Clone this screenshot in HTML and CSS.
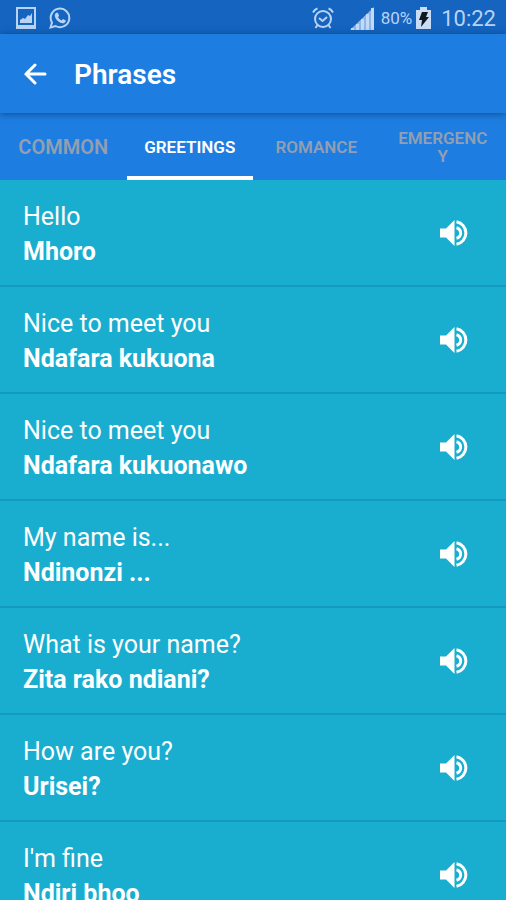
FILE: index.html
```html
<!DOCTYPE html>
<html lang="en">
<head>
<meta charset="utf-8">
<meta name="viewport" content="width=device-width, initial-scale=1">
<title>Phrases</title>
<link rel="stylesheet" href="styles.css">
</head>
<body>
<svg width="0" height="0" class="sprite" aria-hidden="true">
  <symbol id="speaker" viewBox="0 0 30 26">
    <path fill="#fff" d="M0 8.500h6L14.500 0v26L6 17.500H0z"/>
    <path fill="none" stroke="#fff" stroke-width="3" d="M16.500 1.700a11.500 11.500 0 0 1 0 22.600"/>
    <path fill="none" stroke="#fff" stroke-width="3" d="M16.500 7.700c5.500 1.500 5.500 9.100 0 10.600"/>
  </symbol>
</svg>
<div class="app">
  <div class="status">
    <svg class="status-picture" viewBox="0 0 20 22" width="20" height="22"><path fill="none" stroke="#b9d3f4" stroke-width="2" d="M1 1h18v20H1z"/><path fill="#b9d3f4" d="M4 16v-3l3-2 2 1 3-4 2 1 2-3v10zM2 18h16v2H2z"/></svg>
    <svg class="status-chat" viewBox="0 0 22 22" width="22" height="22"><path fill="none" stroke="#b9d3f4" stroke-width="2" d="M1.500 20.500 3 15.600A9.300 9.300 0 1 1 6.500 19z"/><path fill="#b9d3f4" d="M7.300 5.800h1.600l1.200 3-1 1.400c.8 1.500 2 2.500 3.500 3.200l1.400-1.400 2.800 1.400c0 2-1.700 3-3.300 2.800-4-.6-7.300-4-7.700-7.500-.1-1.200.5-2.300 1.500-2.900z"/></svg>
    <svg class="status-alarm" viewBox="0 0 22 22" width="22" height="22"><g fill="none" stroke="#b9d3f4" stroke-width="2"><circle cx="11" cy="12" r="8"/><path d="m7 11 3.500 3 4.500-4M1 5.500C2 3.500 3.500 2 5.500 1.500M21 5.500c-1-2-2.500-3.500-4.500-4M5.500 18l-2 3M16.500 18l2 3"/></g></svg>
    <svg class="status-signal" viewBox="0 0 24 24" width="24" height="24"><path fill="#8fb6e8" d="M0 24 24 1v23z"/><path fill="#c3daf7" d="M1 22h3v2H1zM6 18h3v6H6zM11 13h3v11h-3zM16 8h3v16h-3zM21 2h3v22h-3z"/></svg>
    <span class="battery-level">80%</span>
    <svg class="status-battery" viewBox="0 0 15 22" width="15" height="22"><path fill="#c9ddf6" d="M0 3h4V0h7v3h4v19H0z"/><path fill="#101820" d="M6 5h6l-2 5h3L5 20l1-7H3z"/></svg>
    <time class="clock">10:22</time>
  </div>
  <header class="bar">
    <button class="back" type="button" aria-label="Back"><svg viewBox="0 0 24 22" width="24" height="22"><path fill="none" stroke="#fff" stroke-width="3" stroke-linecap="round" d="M22 11H3M12 2l-9 9 9 9"/></svg></button>
    <h1>Phrases</h1>
  </header>
  <nav class="tabs">
    <button class="tab tab-large" type="button">COMMON</button>
    <button class="tab active" type="button">GREETINGS</button>
    <button class="tab" type="button">ROMANCE</button>
    <button class="tab" type="button">EMERGENCY</button>
  </nav>
  <ul class="list">
    <li><div><p>Hello</p><p class="translation">Mhoro</p></div><button type="button" aria-label="Play Mhoro"><svg width="30" height="26"><use href="#speaker"/></svg></button></li>
    <li><div><p>Nice to meet you</p><p class="translation">Ndafara kukuona</p></div><button type="button" aria-label="Play Ndafara kukuona"><svg width="30" height="26"><use href="#speaker"/></svg></button></li>
    <li><div><p>Nice to meet you</p><p class="translation">Ndafara kukuonawo</p></div><button type="button" aria-label="Play Ndafara kukuonawo"><svg width="30" height="26"><use href="#speaker"/></svg></button></li>
    <li><div><p>My name is...</p><p class="translation">Ndinonzi ...</p></div><button type="button" aria-label="Play Ndinonzi"><svg width="30" height="26"><use href="#speaker"/></svg></button></li>
    <li><div><p>What is your name?</p><p class="translation">Zita rako ndiani?</p></div><button type="button" aria-label="Play Zita rako ndiani?"><svg width="30" height="26"><use href="#speaker"/></svg></button></li>
    <li><div><p>How are you?</p><p class="translation">Urisei?</p></div><button type="button" aria-label="Play Urisei?"><svg width="30" height="26"><use href="#speaker"/></svg></button></li>
    <li><div><p>I'm fine</p><p class="translation">Ndiri bhoo</p></div><button type="button" aria-label="Play Ndiri bhoo"><svg width="30" height="26"><use href="#speaker"/></svg></button></li>
  </ul>
</div>
</body>
</html>
```
FILE: styles.css
```css
* { box-sizing: border-box; }
body { margin: 0; font-family: Roboto, "Liberation Sans", sans-serif; color: #fff; background: #19aed0; }
button { margin: 0; padding: 0; border: 0; background: none; color: inherit; font: inherit; cursor: pointer; }
svg { display: block; flex: none; }
.sprite { position: absolute; }
.app { display: flex; flex-direction: column; height: 100vh; overflow: hidden; }
.status { display: flex; flex: none; align-items: center; height: 34px; padding: 2px 10px 0 16px; background: #1464c0; color: #b9d3f4; }
.status-chat { margin-left: 13px; }
.status-alarm { margin-left: auto; }
.status-signal { margin: 0 7px 0 16px; }
.battery-level { font-size: 17px; }
.status-battery { margin: 0 10px 0 4px; }
.clock { font-size: 22px; }
.bar { position: relative; display: flex; flex: none; align-items: center; gap: 27px; height: 79px; padding: 0 23px; background: #1e7de0; box-shadow: 0 1px 7px rgba(0, 30, 60, 0.5); }
h1 { margin: 0; padding-top: 2px; font-size: 28px; font-weight: 600; line-height: 36px; }
.tabs { display: grid; flex: none; grid-template-columns: repeat(4, minmax(0, 1fr)); height: 67px; background: #1e7de0; }
.tab { padding: 4px 17px 0; border-bottom: 4px solid transparent; color: #929fb3; font-size: 17px; font-weight: 600; line-height: 18px; overflow-wrap: anywhere; }
.tab-large { font-size: 20px; }
.active { border-color: #fff; color: #fff; }
.list { flex: 1; min-height: 0; margin: 0; padding: 0; list-style: none; overflow: hidden; }
.list li { display: flex; align-items: center; justify-content: space-between; height: 107px; padding: 0 36px 0 23px; border-bottom: 2px solid #1499c2; }
.list p { margin: 0; font-size: 25px; line-height: 35px; }
.list div { padding-top: 3px; }
.list .translation { font-weight: 700; }
```
